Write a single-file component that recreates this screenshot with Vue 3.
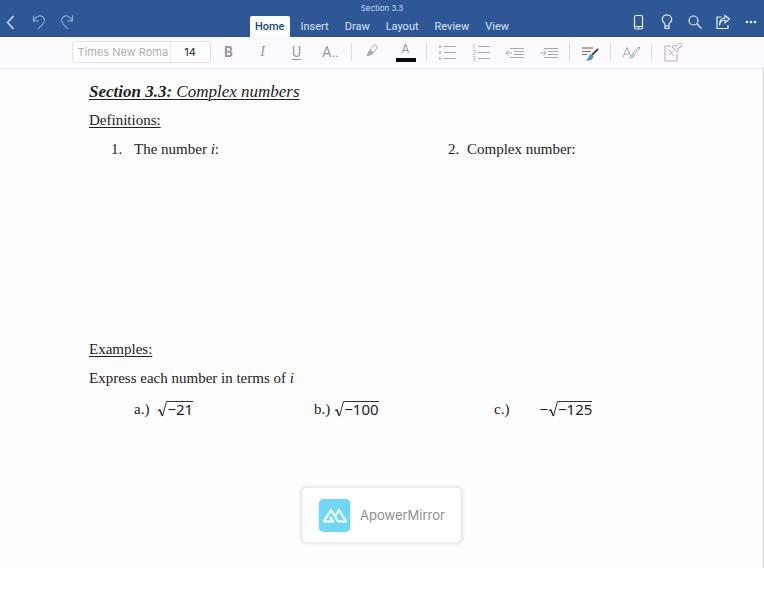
<template>
  <div class="app">
    <header class="header">
      <div class="actions left">
        <button aria-label="Back">
          <svg width="20" height="20" viewBox="0 0 20 20"><path d="M13.500 4L7.500 10.500L13.500 17" /></svg>
        </button>
        <button class="faded" aria-label="Undo">
          <svg width="20" height="20" viewBox="0 0 20 20"><path d="M5.500 3.500V9H11M5.500 9C8 4 12 2.500 15 5C18 8 16.500 11 10 17" /></svg>
        </button>
        <button class="faded" aria-label="Redo">
          <svg width="20" height="20" viewBox="0 0 20 20"><path d="M16.500 3.500V9H11M16.500 9C14 4 10 2.500 7 5C4 8 5.500 11 12 17" /></svg>
        </button>
      </div>

      <div class="center">
        <div class="doc-name">Section 3.3</div>
        <nav class="tabs">
          <button
            v-for="tab in tabs"
            :key="tab"
            class="tab"
            :class="{ active: tab === activeTab }"
            @click="activeTab = tab"
          >{{ tab }}</button>
        </nav>
      </div>

      <div class="actions right">
        <button aria-label="Mobile view">
          <svg width="20" height="20" viewBox="0 0 20 20"><rect x="5.500" y="3.500" width="8" height="13.500" rx="1.500" /><path d="M5.500 14.500H13.500M8.500 15.800H10.500" /></svg>
        </button>
        <button aria-label="Tell me">
          <svg width="20" height="20" viewBox="0 0 20 20"><path d="M8 14V12.500C8 11 5.300 10 5.300 7.500A4.700 4.700 0 0 1 14.700 7.500C14.700 10 12 11 12 12.500V14ZM8 14V16.500H12V14" /></svg>
        </button>
        <button aria-label="Search">
          <svg width="20" height="20" viewBox="0 0 20 20"><circle cx="8.500" cy="8.500" r="4.500" /><path d="M12 12L16.500 16.500" /></svg>
        </button>
        <button aria-label="Share">
          <svg width="20" height="20" viewBox="0 0 20 20"><path d="M8.500 5H4V16.500H15V13M6.500 13.500C7 9.500 9 8 12 8V10.800L16.500 7L12 3.500V6C9 6 6.500 8 6.500 13.500Z" /></svg>
        </button>
        <button aria-label="More">
          <svg class="dots" width="20" height="20" viewBox="0 0 20 20"><circle cx="6" cy="10" r="1.300" /><circle cx="10" cy="10" r="1.300" /><circle cx="14" cy="10" r="1.300" /></svg>
        </button>
      </div>
    </header>

    <div class="toolbar">
      <div class="font-box">
        <button class="font-name">Times New Roma</button>
        <button class="font-size">14</button>
      </div>
      <button class="tool bold">B</button>
      <button class="tool italic">I</button>
      <button class="tool underline">U</button>
      <button class="tool more">A<span>..</span></button>
      <span class="sep"></span>
      <button class="tool" aria-label="Highlight">
        <svg width="22" height="22" viewBox="0 0 22 22"><path d="M9 9L13 4C14 3 17 5 16 7L12 12L9 9Z" /><path class="fill" d="M8.500 9.500L11.500 12.500L9 14L6 14.500Z" /></svg>
      </button>
      <button class="tool font-color" aria-label="Font color">A</button>
      <span class="sep"></span>
      <button class="tool" aria-label="Bullets">
        <svg width="22" height="22" viewBox="0 0 22 22"><path d="M8 5.500H20M8 11.500H20M8 17.500H20" /><path class="dot" d="M3 5.500H5M3 11.500H5M3 17.500H5" /></svg>
      </button>
      <button class="tool" aria-label="Numbering">
        <svg width="22" height="22" viewBox="0 0 22 22"><path d="M8 5.500H20M8 11.500H20M8 17.500H20" /><path class="thin" d="M3 4L4 3.500V7.500M3 9.500H5V11L3 13.500H5M3 15.500H5L4 17.500H5V19.500H3" /></svg>
      </button>
      <button class="tool" aria-label="Decrease indent">
        <svg width="22" height="22" viewBox="0 0 22 22"><path d="M6 7.500H20M10 10.500H20M10 13.500H20M6 16.500H20M8 12H2M4.500 9.500L2 12L4.500 14.500" /></svg>
      </button>
      <button class="tool" aria-label="Increase indent">
        <svg width="22" height="22" viewBox="0 0 22 22"><path d="M6 7.500H20M10 10.500H20M10 13.500H20M6 16.500H20M2 12H8M5.500 9.500L8 12L5.500 14.500" /></svg>
      </button>
      <span class="sep"></span>
      <button class="tool" aria-label="Styles">
        <svg width="22" height="22" viewBox="0 0 22 22"><path class="orange" d="M3 7H14" /><path class="dark" d="M3 10.500H12M3 13.500H8" /><path class="brush-handle" d="M19 8L13 14" /><path class="brush" d="M11.500 13L14.500 15.500C13 20 10 20 7 19C10 17.500 9.500 14.500 11.500 13Z" /></svg>
      </button>
      <span class="sep"></span>
      <button class="tool" aria-label="Format painter">
        <svg width="22" height="22" viewBox="0 0 22 22"><path d="M3 16L7 6.500L11 16M4.500 13H9.500" /><path d="M20 7L14.500 13.500L12.500 12L19 6Z" /><path class="brush pale" d="M12.500 12.500L15 14.500C14 18 11 18 8.500 17.500C11 16 10.500 14 12.500 12.500Z" /></svg>
      </button>
      <span class="sep"></span>
      <button class="tool" aria-label="Paste">
        <svg class="paste" width="22" height="22" viewBox="0 0 22 22"><path d="M10 5H4V20H16V13" /><path d="M8 9L13 15M8 14L12 10" /><path d="M11 6L16 11L18 9L16.500 7.500L20 6C22 3 19 1 17 3L15.500 5.500L14 4Z" /></svg>
      </button>
    </div>

    <main class="page">
      <h1><strong>Section 3.3:</strong> Complex numbers</h1>
      <h2>Definitions:</h2>
      <ol class="definitions">
        <li><span class="num">1.</span><span>The number <i>i</i>:</span></li>
        <li><span class="num">2.</span><span>Complex number:</span></li>
      </ol>
      <h2>Examples:</h2>
      <p>Express each number in terms of <i>i</i></p>
      <div class="problems">
        <div v-for="p in problems" :key="p.label" class="problem" :class="p.spacing">
          <span>{{ p.label }}</span>
          <span class="math">
            <span v-if="p.sign">{{ p.sign }}</span>
            <svg width="10" height="17" viewBox="0 0 10 17"><path d="M0.500 10L2.500 8.500L5.500 15L9.500 0.500H10" /><path class="heavy" d="M2.500 8.500L5.500 15" /></svg>
            <span class="radicand">{{ p.value }}</span>
          </span>
        </div>
      </div>

      <div class="mirror">
        <svg width="32" height="33" viewBox="0 0 32 33">
          <rect width="32" height="33" rx="5" fill="#71d5f6" />
          <path d="M5 22.500H14.500L11.500 18M5 22.500L12.500 11L19.500 22.500H27.500L20.500 11L17 16.500" fill="none" stroke="#e9faff" stroke-width="2.400" stroke-linejoin="round" />
        </svg>
        <span>ApowerMirror</span>
      </div>
    </main>
  </div>
</template>

<script setup>
import { ref } from 'vue'

const tabs = ['Home', 'Insert', 'Draw', 'Layout', 'Review', 'View']
const activeTab = ref('Home')

const problems = [
  { label: 'a.)', value: '−21', spacing: 'normal' },
  { label: 'b.)', value: '−100', spacing: 'tight' },
  { label: 'c.)', value: '−125', spacing: 'wide', sign: '−' }
]
</script>

<style>
body {
  margin: 0;
  background: #fff;
}
</style>

<style scoped>
.app {
  display: flex;
  flex-direction: column;
  box-sizing: border-box;
  min-height: 100vh;
  padding-bottom: 22px;
  font-family: Roboto, "Liberation Sans", sans-serif;
}

button {
  padding: 0;
  border: none;
  background: none;
  font-family: inherit;
  cursor: pointer;
}

svg {
  display: block;
}

/* header */
.header {
  display: grid;
  grid-template-columns: 1fr auto 1fr;
  height: 37px;
  background: #2f5796;
}

.actions {
  display: flex;
  align-items: center;
  padding-top: 6px;
  gap: 8px;
}

.actions.right {
  justify-content: flex-end;
  padding-right: 3px;
}

.actions svg {
  fill: none;
  stroke: #e6f1ff;
  stroke-width: 1.2;
}

.actions .faded svg {
  stroke: #86a9dc;
}

.actions .dots {
  fill: #e6f1ff;
  stroke: none;
}

.center {
  display: flex;
  flex-direction: column;
  align-items: center;
}

.doc-name {
  height: 16px;
  color: #c9daf3;
  font-family: Inter, sans-serif;
  font-size: 8px;
  line-height: 17px;
}

.tabs {
  display: flex;
  flex: 1;
  gap: 6px;
}

.tab {
  padding: 0 5px;
  border-radius: 2px 2px 0 0;
  color: #d3e2f7;
  font-size: 11px;
  line-height: 20px;
}

.tab.active {
  background: #fdfcfe;
  color: #214a7c;
  font-weight: 500;
}

/* toolbar */
.toolbar {
  display: flex;
  align-items: center;
  justify-content: center;
  box-sizing: border-box;
  height: 32px;
  padding: 0 4px 2px 0;
  border-bottom: 1px solid #e7e6ea;
  background: #fcfaff;
}

.font-box {
  display: flex;
  box-sizing: border-box;
  width: 139px;
  height: 22px;
  margin-right: 1px;
  border: 1px solid #e4e2e7;
  border-radius: 3px;
  background: #fefdff;
}

.font-name {
  width: 98px;
  padding-left: 5px;
  border-right: 1px solid #eeecf0;
  color: #b0aeb2;
  font-family: Inter, sans-serif;
  font-size: 11px;
  text-align: left;
  white-space: nowrap;
  overflow: hidden;
}

.font-size {
  flex: 1;
  color: #222;
  font-family: Inter, sans-serif;
  font-size: 11px;
}

.tool {
  display: flex;
  align-items: center;
  justify-content: center;
  width: 34px;
  height: 30px;
  color: #98969b;
  font-size: 14px;
}

.tool svg {
  fill: none;
  stroke: #a9a7ac;
  stroke-width: 1;
}

.tool .fill {
  fill: #a9a7ac;
}

.tool .dot {
  stroke-width: 2;
}

.tool .thin {
  stroke: #c3c1c6;
}

.tool .orange {
  stroke: #c9a27c;
  stroke-width: 2;
}

.tool .dark {
  stroke: #77757a;
}

.tool .brush-handle {
  stroke: #444;
  stroke-width: 2;
}

.tool .brush {
  fill: #4b94c4;
  stroke: none;
}

.tool .pale {
  fill: #a9cde3;
}

.tool .paste {
  stroke: #bda9b0;
}

.bold {
  font-weight: 700;
}

.italic {
  font-family: "Liberation Serif", serif;
  font-style: italic;
}

.underline {
  text-decoration: underline;
  text-underline-offset: 2px;
}

.font-color {
  position: relative;
  padding-bottom: 5px;
  font-size: 12px;
}

.font-color::after {
  content: '';
  position: absolute;
  bottom: 5px;
  left: 7px;
  width: 20px;
  height: 4px;
  background: #0b090d;
}

.sep {
  width: 1px;
  height: 18px;
  margin: 0 3px;
  background: #dcdadf;
}

/* document */
.page {
  position: relative;
  flex: 1;
  padding: 8px 0 144px 89px;
  border-right: 1px solid #cfcfcf;
  background: #fdfdfd;
  color: #222;
  font-family: "Liberation Serif", "Times New Roman", serif;
  font-size: 15px;
  line-height: 29px;
}

h1,
h2,
p {
  margin: 0;
  font-size: 15px;
  font-weight: 400;
}

h1 {
  font-size: 17px;
  font-style: italic;
}

h1,
h2 {
  text-decoration: underline;
  text-decoration-thickness: 1px;
  text-underline-offset: 2px;
}

.definitions {
  display: grid;
  grid-template-columns: 337px 1fr;
  height: 200px;
  margin: 0;
  padding: 0 0 0 22px;
  list-style: none;
}

.definitions li {
  display: flex;
}

.definitions .num {
  width: 19px;
}

.definitions li:first-child .num {
  width: 23px;
}

.problems {
  display: grid;
  grid-template-columns: 180px 180px 1fr;
  margin-top: 2px;
  padding-left: 45px;
}

.problem {
  display: flex;
  gap: 8px;
}

.problem.tight {
  gap: 4px;
}

.problem.wide {
  gap: 30px;
}

.math {
  display: flex;
  align-items: center;
  font-family: "Noto Sans", sans-serif;
  font-size: 15px;
}

.math svg {
  fill: none;
  stroke: #333;
  stroke-width: 1;
}

.math .heavy {
  stroke-width: 1.5;
}

.radicand {
  height: 16px;
  border-top: 1px solid #333;
  line-height: 14px;
}

/* mirroring badge */
.mirror {
  position: absolute;
  bottom: 25px;
  left: 50%;
  display: flex;
  align-items: center;
  gap: 10px;
  box-sizing: border-box;
  height: 56px;
  padding: 0 16px;
  border: 1px solid #ececec;
  border-radius: 5px;
  background: #fff;
  box-shadow: 0 0 3px 1px #e6e6e6;
  color: #8e8e8e;
  font-family: Inter, sans-serif;
  font-size: 13px;
  transform: translateX(-50%);
}
</style>
